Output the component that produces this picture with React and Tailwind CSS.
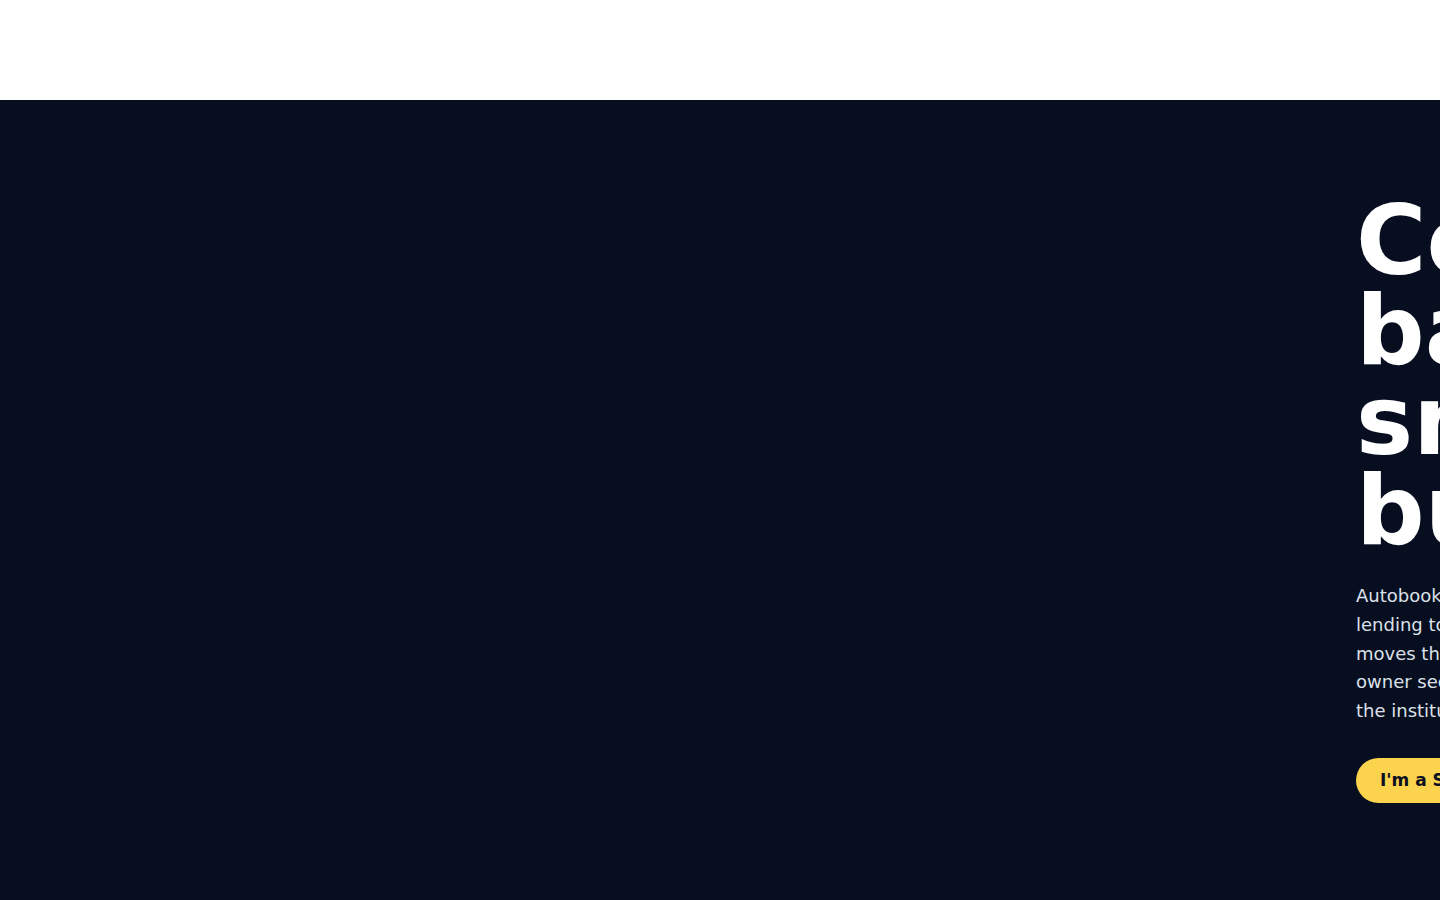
import React from 'react';

export default function App() {
  return (
    <div className="min-h-screen w-full overflow-hidden bg-[#060e20] font-['DejaVu_Sans',sans-serif]">
      {/* Header */}
      <header className="h-[100px] w-full bg-white"></header>

      {/* Hero */}
      <section className="flex w-max bg-[#060e20] pt-[96px] pb-[97px]">
        <div className="w-[1356px] shrink-0"></div>
        <div className="w-[560px] shrink-0">
          <h1 className="text-[96px] font-bold leading-[90px] text-white">
            Connected banking, smarter business.
          </h1>
          <p className="mt-[26px] text-[18px] leading-[28.8px] text-[#dce1e9]">
            Autobooks brings digital invoicing, payments and
            <br />
            lending to the small businesses you serve. It
            <br />
            moves the everyday work of a business
            <br />
            owner securely into online banking, right inside
            <br />
            the institution they already trust.
          </p>
          <div className="mt-[32px]">
            <button className="rounded-full bg-[#fcd34d] px-6 py-[10px] text-[17px] font-bold text-[#0b1020]">
              I'm a Small Business
            </button>
          </div>
        </div>
      </section>
    </div>
  );
}
